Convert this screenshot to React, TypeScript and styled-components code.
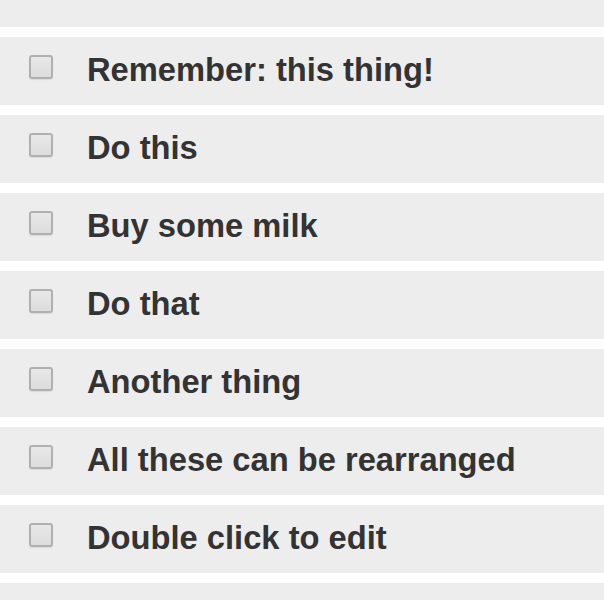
import React from 'react'
import styled, { createGlobalStyle } from 'styled-components'

const GlobalStyle = createGlobalStyle`
  html, body {
    margin: 0;
    padding: 0;
    background: #ffffff;
    overflow: hidden;
  }
`

const List = styled.ul`
  display: flex;
  flex-direction: column;
  gap: 10px;
  margin: 0;
  padding: 0;
  list-style: none;
  width: 604px;
  height: 600px;
  overflow: hidden;
`

const TopBar = styled.li`
  height: 27px;
  flex-shrink: 0;
  background: #ededed;
`

const Item = styled.li`
  display: flex;
  align-items: flex-start;
  gap: 34px;
  height: 68px;
  flex-shrink: 0;
  padding-left: 29px;
  box-sizing: border-box;
  background: #ededed;
`

const Box = styled.span`
  display: block;
  flex-shrink: 0;
  width: 24px;
  height: 24px;
  margin-top: 18px;
  box-sizing: border-box;
  border: 2px solid #b0b0b0;
  border-radius: 3px;
  background: linear-gradient(#e8e8e8, #dcdcdc);
  box-shadow: 0 1px 1px rgba(0, 0, 0, 0.08);
`

const Label = styled.span`
  font-family: 'Liberation Sans', Arial, sans-serif;
  font-weight: 700;
  font-size: 32.7px;
  line-height: 36px;
  margin-top: 15px;
  color: #333333;
  white-space: nowrap;
`

const todos = [
  'Remember: this thing!',
  'Do this',
  'Buy some milk',
  'Do that',
  'Another thing',
  'All these can be rearranged',
  'Double click to edit',
]

export default function App() {
  return (
    <>
      <GlobalStyle />
      <List>
        <TopBar />
        {todos.map(text => (
          <Item key={text}>
            <Box />
            <Label>{text}</Label>
          </Item>
        ))}
        <Item />
      </List>
    </>
  )
}
